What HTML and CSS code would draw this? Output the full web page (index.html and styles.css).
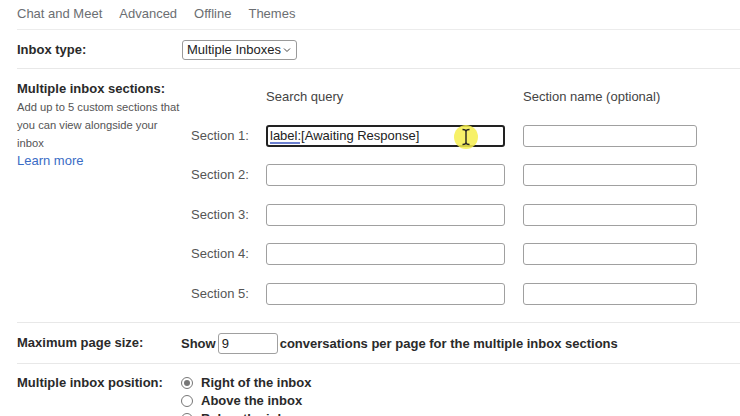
FILE: index.html
```html
<!DOCTYPE html>
<html>
<head>
<meta charset="utf-8">
<link rel="stylesheet" href="styles.css">
</head>
<body>
<div class="page">
  <nav class="tabs">
    <span>Chat and Meet</span>
    <span>Advanced</span>
    <span>Offline</span>
    <span>Themes</span>
  </nav>

  <div class="row row-type">
    <div class="label">Inbox type:</div>
    <div class="select">Multiple Inboxes
      <svg class="chev" width="8" height="6" viewBox="0 0 8 6"><path d="M1 1.5 L4 4.5 L7 1.5" fill="none" stroke="#444" stroke-width="1"/></svg>
    </div>
  </div>

  <div class="row row-sections">
    <div class="info">
      <div class="label">Multiple inbox sections:</div>
      <div class="desc">Add up to 5 custom sections that<br>you can view alongside your<br>inbox</div>
      <div class="learn">Learn more</div>
    </div>
    <div class="grid">
      <div></div>
      <div class="colhead">Search query</div>
      <div class="colhead">Section name (optional)</div>

      <div class="sec">Section 1:</div>
      <div class="field q focus"><span class="ul">label:[</span>Awaiting Response]
        <div class="cursor">
          <svg width="26" height="26" viewBox="0 0 26 26">
            <circle cx="13" cy="13" r="12" fill="#f6ee4e" fill-opacity="0.85"/>
            <path d="M9.5 5.5 Q13 5.5 13 7.5 Q13 5.5 16.5 5.5 M13 7.5 V18.5 M9.5 20.5 Q13 20.5 13 18.5 Q13 20.5 16.5 20.5" stroke="#222" stroke-width="1.4" fill="none"/>
          </svg>
        </div>
      </div>
      <div class="field n"></div>

      <div class="sec">Section 2:</div>
      <div class="field q"></div>
      <div class="field n"></div>

      <div class="sec">Section 3:</div>
      <div class="field q"></div>
      <div class="field n"></div>

      <div class="sec">Section 4:</div>
      <div class="field q"></div>
      <div class="field n"></div>

      <div class="sec">Section 5:</div>
      <div class="field q"></div>
      <div class="field n"></div>
    </div>
  </div>

  <div class="row row-size">
    <div class="label">Maximum page size:</div>
    <div class="sizectl">
      <span class="b">Show</span>
      <div class="field small">9</div>
      <span class="b">conversations per page for the multiple inbox sections</span>
    </div>
  </div>

  <div class="row row-pos">
    <div class="label">Multiple inbox position:</div>
    <div class="radios">
      <div class="radio"><span class="dot on"></span>Right of the inbox</div>
      <div class="radio"><span class="dot"></span>Above the inbox</div>
      <div class="radio"><span class="dot"></span>Below the inbox</div>
    </div>
  </div>
</div>
</body>
</html>
```

FILE: styles.css
```css
* { box-sizing: border-box; }
html, body { margin: 0; padding: 0; background: #fff; overflow: hidden; }
body {
  font-family: "Liberation Sans", Arial, sans-serif;
  font-size: 13px;
  color: #202124;
  width: 740px;
  height: 416px;
}
.page { padding-left: 17px; }

.tabs {
  display: flex;
  gap: 17px;
  height: 30px;
  padding-top: 5px;
  line-height: 18px;
  color: #6b6e72;
  font-size: 13px;
  border-bottom: 1px solid #ececec;
}

.row {
  display: flex;
  border-bottom: 1px solid #e8e8e8;
}
.label {
  font-weight: bold;
  color: #2a2a2a;
  line-height: 18px;
}

.row-type {
  height: 39px;
  align-items: center;
  padding-top: 2px;
}
.row-type .label { width: 165px; }
.select {
  position: relative;
  height: 20px;
  width: 115px;
  border: 1px solid #9a9a9a;
  border-radius: 3px;
  padding-left: 4px;
  line-height: 18px;
  color: #222;
}
.chev { position: absolute; right: 5px; top: 6px; }

.row-sections {
  height: 254px;
  padding-top: 11px;
}
.info { width: 165px; }
.desc {
  font-size: 11.2px;
  line-height: 18px;
  color: #555;
  white-space: nowrap;
}
.learn {
  color: #3a6cc5;
  line-height: 18px;
  font-size: 13px;
}
.grid {
  display: grid;
  grid-template-columns: 75px 257px 174px;
  grid-template-rows: 18px repeat(5, 22px);
  row-gap: 17.5px;
  padding-left: 9px;
  padding-top: 9px;
  align-items: center;
}
.colhead {
  color: #444;
  line-height: 18px;
  margin-bottom: 2px;
}
.sec { color: #555; line-height: 18px; }
.field {
  height: 22px;
  border: 1px solid #a0a0a0;
  border-radius: 3px;
  background: #fff;
  line-height: 20px;
  padding-left: 3px;
  color: #222;
}
.field.q { width: 239px; }
.field.n { width: 174px; }
.field.focus {
  position: relative;
  border: 2px solid #222;
  line-height: 18px;
  padding-left: 2px;
}
.ul {
  text-decoration: underline;
  text-decoration-color: #6b7fd0;
  text-decoration-thickness: 2px;
  text-underline-offset: 2px;
}
.cursor {
  position: absolute;
  left: 185px;
  top: -3px;
  width: 26px;
  height: 26px;
}
.cursor svg { display: block; }

.row-size {
  height: 41px;
  align-items: center;
}
.row-size .label { width: 164px; }
.sizectl { display: flex; align-items: center; }
.b { font-weight: bold; color: #2a2a2a; }
.field.small {
  width: 60px;
  height: 21px;
  margin: 0 2px 0 2px;
  line-height: 19px;
}

.row-pos {
  border-bottom: none;
  padding-top: 10px;
}
.row-pos .label { width: 164px; }
.radios { display: flex; flex-direction: column; }
.radio {
  display: flex;
  align-items: center;
  line-height: 18px;
  font-weight: bold;
  color: #2a2a2a;
}
.dot {
  width: 12px;
  height: 12px;
  border: 1px solid #777;
  border-radius: 50%;
  margin: 0 8px 0 0;
  position: relative;
}
.dot.on::after {
  content: "";
  position: absolute;
  left: 2px; top: 2px;
  width: 6px; height: 6px;
  border-radius: 50%;
  background: #777;
}
```
